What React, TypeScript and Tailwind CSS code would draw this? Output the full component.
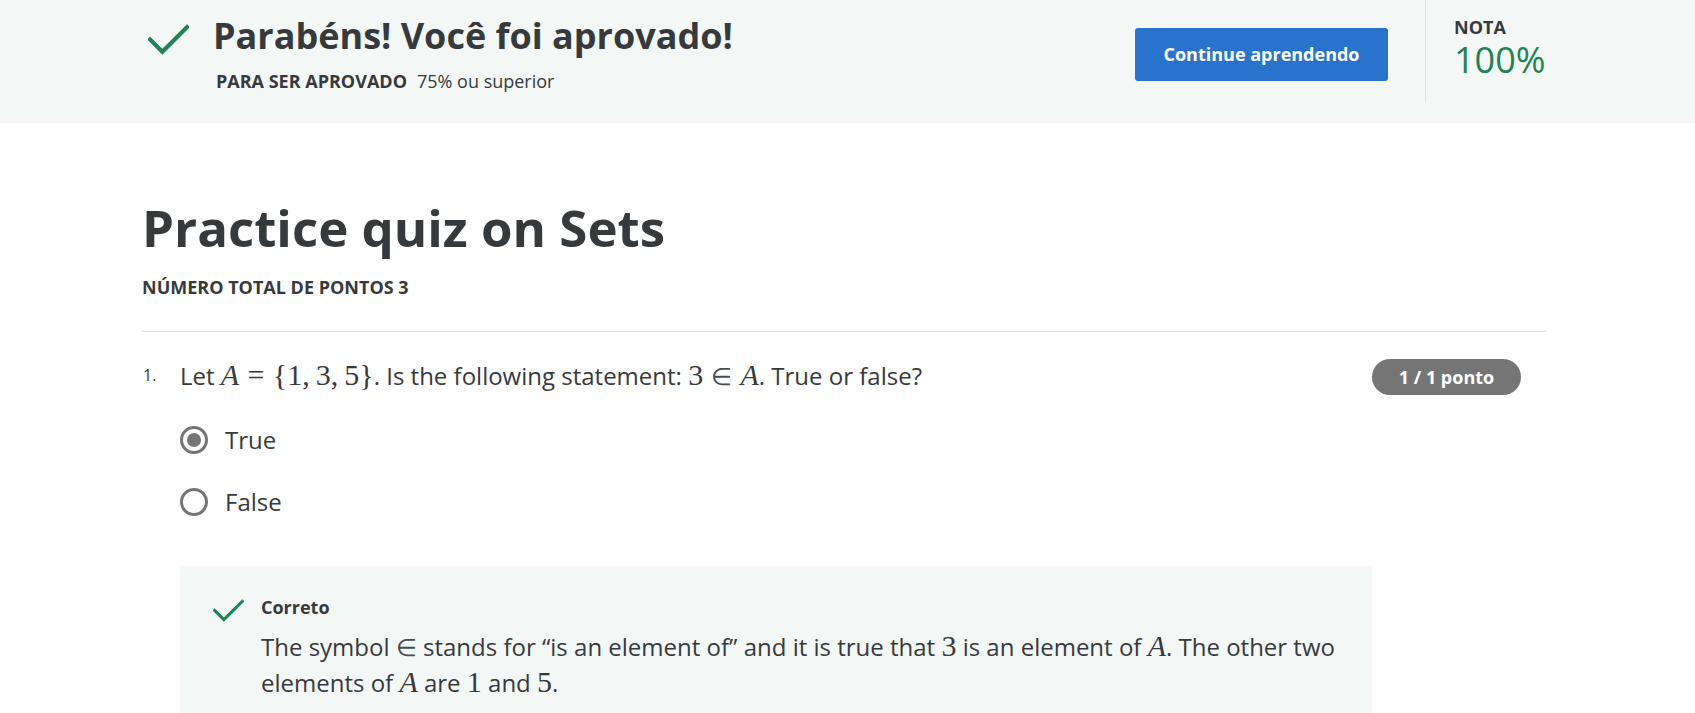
import React from 'react';

const font = { fontFamily: '"Open Sans", "Noto Sans", sans-serif' };
const mathFont = { fontFamily: '"Liberation Serif", "DejaVu Serif", serif' };

function Check({ className }: { className?: string }) {
  return (
    <svg viewBox="0 0 40 30" className={className} fill="none">
      <polyline points="2,15 14,27 38,3" stroke="#1f8354" strokeWidth="4" strokeLinecap="square" />
    </svg>
  );
}

// KaTeX-ish inline math
function M({ children, italic }: { children: React.ReactNode; italic?: boolean }) {
  return (
    <span className={`text-[1.25em] leading-none ${italic ? 'italic' : ''}`} style={mathFont}>
      {children}
    </span>
  );
}

function Rel({ children }: { children: React.ReactNode }) {
  return (
    <span className="text-[1.25em] leading-none mx-[0.28em]" style={mathFont}>
      {children}
    </span>
  );
}

function Elem() {
  return (
    <span
      className="text-[1em] leading-none font-extralight text-[#4a4d50]"
      style={{ fontFamily: '"DejaVu Sans", "Liberation Serif", serif' }}
    >
      ∈
    </span>
  );
}

function Radio({ checked, label }: { checked?: boolean; label: string }) {
  return (
    <label className="flex items-center gap-[17px] h-[28px]">
      <span className="w-[28px] h-[28px] rounded-full border-[3px] border-[#757575] flex items-center justify-center">
        {checked && <span className="w-[14px] h-[14px] rounded-full bg-[#757575]" />}
      </span>
      <span className="text-[24px] text-[#373a3c]">{label}</span>
    </label>
  );
}

export default function App() {
  return (
    <div className="min-h-screen bg-white text-[#373a3c]" style={font}>
      <div className="bg-[#f3f8f6] h-[123px]">
        <div className="w-[1404px] ml-[142px] flex h-full">
          <div className="flex-1 flex items-start pt-[14px]">
            <Check className="w-[41px] h-[31px] mt-[10px] ml-[6px]" />
            <div className="ml-[24px]">
              <h1 className="text-[36px] font-bold leading-[44px]">Parabéns! Você foi aprovado!</h1>
              <div className="mt-[10px] ml-[3px] text-[18px] leading-[26px]">
                <span className="font-bold">PARA SER APROVADO</span>
                <span className="ml-[10px]">75% ou superior</span>
              </div>
            </div>
          </div>
          <div className="pt-[28px] pr-[37px]">
            <button className="w-[253px] h-[53px] rounded-[3px] bg-[#2a73cc] text-white text-[18px] font-bold">
              Continue aprendendo
            </button>
          </div>
          <div className="w-px h-[103px] bg-[#dfe3e1]" />
          <div className="pl-[28px] pt-[14px] w-[120px]">
            <div className="text-[18px] font-bold leading-[26px]">NOTA</div>
            <div className="text-[36px] leading-[40px] text-[#1f8354]">100%</div>
          </div>
        </div>
      </div>

      <div className="w-[1404px] ml-[142px]">
        <h2 className="mt-[72px] text-[51px] font-bold leading-[64px]">Practice quiz on Sets</h2>
        <div className="mt-[16px] text-[18px] font-bold leading-[24px]">NÚMERO TOTAL DE PONTOS 3</div>
        <div className="mt-[32px] h-px bg-[#e1e1e1]" />

        <div className="mt-[28px] flex">
          <div className="w-[38px] text-[16px] leading-[30px] pl-[1px]">1.</div>
          <div className="flex-1">
            <div className="flex justify-between items-start">
              <p className="text-[24px] leading-[30px]">
                Let <M italic>A</M>
                <Rel>=</Rel>
                <M>{'{'}1,&thinsp;3,&thinsp;5{'}'}</M>. Is the following statement: <M>3</M>
                <span className="mx-[0.34em]"><Elem /></span>
                <M italic>A</M>. True or false?
              </p>
              <span className="mr-[25px] -mt-[1px] h-[36px] w-[149px] rounded-full bg-[#757575] text-white text-[18px] font-bold flex items-center justify-center">
                1 / 1 ponto
              </span>
            </div>
            <div className="mt-[31px] flex flex-col gap-[34px]">
              <Radio checked label="True" />
              <Radio label="False" />
            </div>
            <div className="mt-[50px] w-[1192px] bg-[#f3f8f6] pt-[30px] pb-[30px] pl-[33px] flex items-start">
              <Check className="w-[31px] h-[23px] mt-[3px]" />
              <div className="ml-[17px]">
                <div className="text-[18px] font-bold leading-[22px]">Correto</div>
                <p className="mt-[11px] text-[24px] leading-[36px] max-w-[1100px]">
                  The symbol <Elem /> stands for “is an element of” and it is true that <M>3</M> is an element of <M italic>A</M>. The other two elements of <M italic>A</M> are <M>1</M> and <M>5</M>.
                </p>
              </div>
            </div>
          </div>
        </div>
      </div>
    </div>
  );
}
